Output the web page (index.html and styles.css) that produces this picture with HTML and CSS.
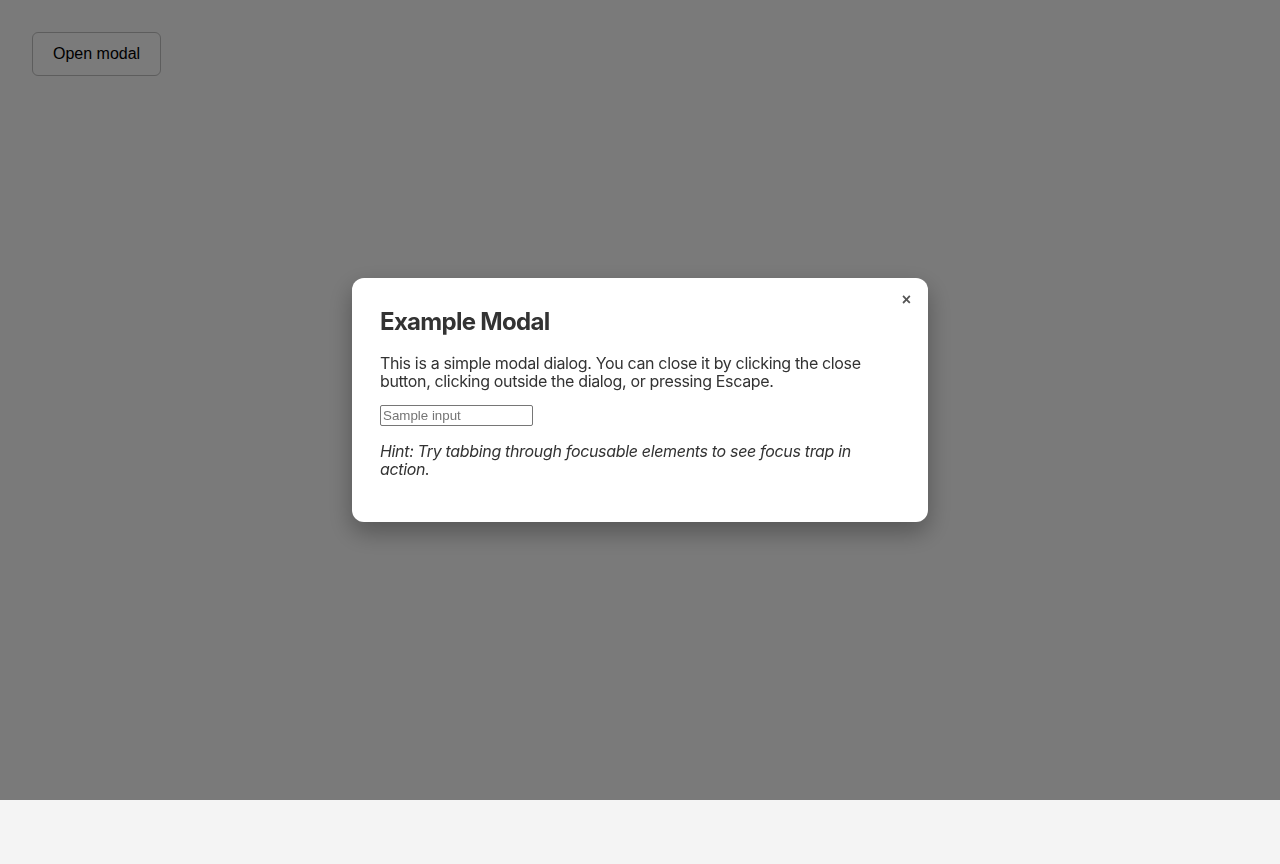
FILE: index.html
```html
<!DOCTYPE html>
<html lang="en">
<head>
<meta charset="utf-8">
<title>Modal</title>
<link rel="stylesheet" href="styles.css">
</head>
<body>
<main class="page">
  <button class="open-btn" type="button">Open modal</button>
</main>
<div class="overlay">
  <div class="modal" role="dialog" aria-modal="true" aria-labelledby="modal-title">
    <button class="close-btn" type="button" aria-label="Close">×</button>
    <h2 id="modal-title" class="modal-title">Example Modal</h2>
    <p class="modal-text">This is a simple modal dialog. You can close it by clicking the close button, clicking outside the dialog, or pressing Escape.</p>
    <input class="modal-input" type="text" placeholder="Sample input">
    <p class="modal-hint">Hint: Try tabbing through focusable elements to see focus trap in action.</p>
  </div>
</div>
</body>
</html>
```

FILE: styles.css
```css
html, body {
  margin: 0;
  padding: 0;
}
body {
  background: #f4f4f4;
  font-family: Inter, "Noto Sans", sans-serif;
  color: #333;
  min-height: 864px;
}
.page {
  padding: 32px;
}
.open-btn {
  font-family: "Liberation Sans", Arial, sans-serif;
  font-size: 16px;
  color: #000;
  background: #f6f6f6;
  border: 1px solid #bbb;
  border-radius: 6px;
  padding: 0 20px;
  height: 44px;
  white-space: nowrap;
}
.overlay {
  position: fixed;
  top: 0;
  left: 0;
  width: 100%;
  height: 800px;
  background: rgba(0, 0, 0, 0.5);
  display: flex;
  align-items: center;
  justify-content: center;
}
.modal {
  position: relative;
  box-sizing: border-box;
  width: 576px;
  background: #fff;
  border-radius: 12px;
  padding: 29px 28px 28px;
  box-shadow: 0 10px 25px rgba(0, 0, 0, 0.3);
}
.close-btn {
  position: absolute;
  top: 15px;
  right: 17px;
  background: none;
  border: none;
  padding: 0;
  font-family: "Liberation Sans", Arial, sans-serif;
  font-size: 16px;
  font-weight: bold;
  line-height: 14px;
  color: #555;
  cursor: pointer;
}
.modal-title {
  margin: 0 0 18px;
  font-size: 24px;
  font-weight: 700;
  letter-spacing: -0.7px;
  line-height: 29px;
  color: #333;
}
.modal-text {
  margin: 0 0 15px;
  font-size: 16px;
  line-height: 18px;
  letter-spacing: -0.35px;
  color: #333;
}
.modal-input {
  display: block;
  box-sizing: border-box;
  width: 153px;
  height: 21px;
  margin: 0;
  padding: 1px 2px;
  font-family: "Liberation Sans", Arial, sans-serif;
  font-size: 13.33px;
  border: 1px solid #767676;
  border-radius: 2px;
}
.modal-input::placeholder {
  color: #757575;
}
.modal-hint {
  margin: 16px 0 16px;
  font-size: 16px;
  line-height: 18px;
  letter-spacing: -0.33px;
  font-style: italic;
  color: #333;
}
```
